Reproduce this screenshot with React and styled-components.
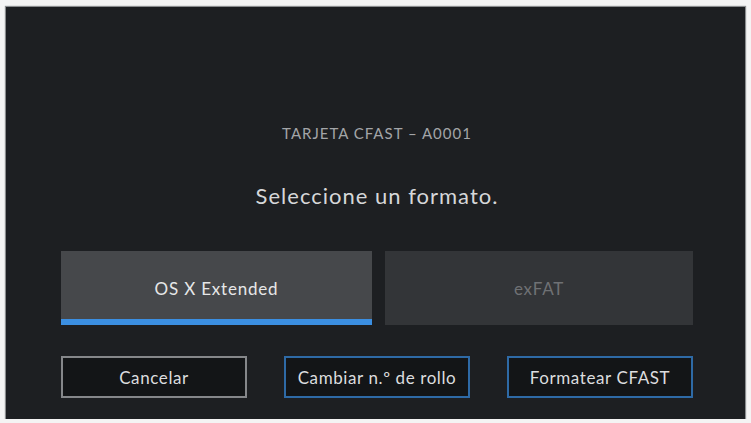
import React from "react";
import styled, { createGlobalStyle } from "styled-components";

const Global = createGlobalStyle`
  html, body { margin: 0; padding: 0; background: #f4f4f4; }
  body { font-family: Lato, "Open Sans", "Liberation Sans", sans-serif; }
  * { box-sizing: border-box; }
`;

const Screen = styled.div`
  margin: 7px 6px 0 6px;
  height: 412px;
  background: #1d1f22;
  box-shadow: 0 0 1px 1px #8a8c8e;
  display: flex;
  flex-direction: column;
  align-items: stretch;
  padding: 117px 52px 0 55px;
`;

const Caption = styled.div`
  text-align: center;
  color: #a3a5a8;
  font-size: 15px;
  line-height: 18px;
  letter-spacing: 1px;
`;

const Heading = styled.div`
  margin-top: 41px;
  text-align: center;
  color: #d6d7d9;
  font-size: 22px;
  line-height: 26px;
  letter-spacing: 1px;
`;

const FormatRow = styled.div`
  margin-top: 42px;
  display: grid;
  grid-template-columns: 311px 1fr;
  gap: 13px;
  height: 74px;
`;

const FormatOption = styled.div`
  display: flex;
  align-items: center;
  justify-content: center;
  padding-top: 6px;
  font-size: 17px;
  letter-spacing: 0.8px;
  background: ${(p) => (p.$active ? "#46484b" : "#333538")};
  color: ${(p) => (p.$active ? "#e6e7e8" : "#6f7174")};
  border-bottom: 6px solid ${(p) => (p.$active ? "#3b8fe2" : "transparent")};
`;

const ActionRow = styled.div`
  margin-top: 31px;
  display: grid;
  grid-template-columns: 186px 186px 186px;
  justify-content: space-between;
`;

const ActionButton = styled.div`
  height: 42px;
  display: flex;
  align-items: center;
  justify-content: center;
  background: #131517;
  border: 2px solid ${(p) => (p.$blue ? "#2e6aa6" : "#85878a")};
  color: #dcdddf;
  font-size: 17px;
  letter-spacing: 0.6px;
`;

export default function App() {
  return (
    <>
      <Global />
      <Screen>
        <Caption>TARJETA CFAST – A0001</Caption>
        <Heading>Seleccione un formato.</Heading>
        <FormatRow>
          <FormatOption $active>OS X Extended</FormatOption>
          <FormatOption>exFAT</FormatOption>
        </FormatRow>
        <ActionRow>
          <ActionButton>Cancelar</ActionButton>
          <ActionButton $blue>Cambiar n.º de rollo</ActionButton>
          <ActionButton $blue>Formatear CFAST</ActionButton>
        </ActionRow>
      </Screen>
    </>
  );
}
